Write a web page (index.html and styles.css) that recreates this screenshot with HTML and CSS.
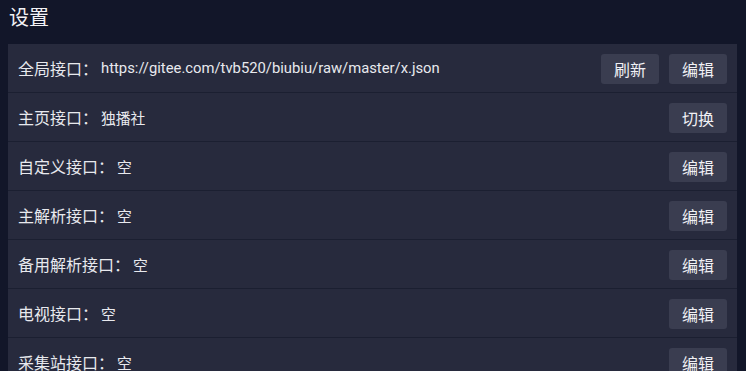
FILE: index.html
```html
<!DOCTYPE html>
<html lang="zh-CN">
<head>
    <meta charset="UTF-8">
    <meta name="viewport" content="width=device-width, initial-scale=1.0">
    <title>设置</title>
    <link rel="stylesheet" href="styles.css">
</head>
<body>
    <h1 class="title">设置</h1>
    <div class="settings">
        <div class="row">
            <span class="label">全局接口：</span>
            <span class="value">https://gitee.com/tvb520/biubiu/raw/master/x.json</span>
            <button class="btn">刷新</button>
            <button class="btn">编辑</button>
        </div>
        <div class="row">
            <span class="label">主页接口：</span>
            <span class="value">独播社</span>
            <button class="btn">切换</button>
        </div>
        <div class="row">
            <span class="label">自定义接口：</span>
            <span class="value">空</span>
            <button class="btn">编辑</button>
        </div>
        <div class="row">
            <span class="label">主解析接口：</span>
            <span class="value">空</span>
            <button class="btn">编辑</button>
        </div>
        <div class="row">
            <span class="label">备用解析接口：</span>
            <span class="value">空</span>
            <button class="btn">编辑</button>
        </div>
        <div class="row">
            <span class="label">电视接口：</span>
            <span class="value">空</span>
            <button class="btn">编辑</button>
        </div>
        <div class="row">
            <span class="label">采集站接口：</span>
            <span class="value">空</span>
            <button class="btn">编辑</button>
        </div>
    </div>
</body>
</html>
```

FILE: styles.css
```css
body {
    font-family: Roboto, "Noto Sans CJK SC", sans-serif;
    background-color: #121629;
    color: #e8e9ee;
    margin: 0;
}
.title {
    font-size: 20px;
    font-weight: normal;
    line-height: 28px;
    margin: 0;
    padding: 4px 9px 4px;
    color: #f2f2f5;
}
.settings {
    background: #272a3d;
    margin: 8px 9px 0 8px;
}
.row {
    display: flex;
    align-items: center;
    gap: 10px;
    height: 48px;
    padding: 0 10px;
    border-bottom: 1px solid #1b1f31;
    font-size: 15px;
}
.label {
    font-size: 16px;
    margin-right: -7px;
}
.value {
    flex: 1;
    font-size: 14.8px;
}
.btn {
    font-family: inherit;
    font-size: 16px;
    color: #f0f0f4;
    background: #3a3d50;
    border: none;
    border-radius: 3px;
    width: 58px;
    height: 30px;
    padding: 0;
    margin-top: 2px;
}
```
